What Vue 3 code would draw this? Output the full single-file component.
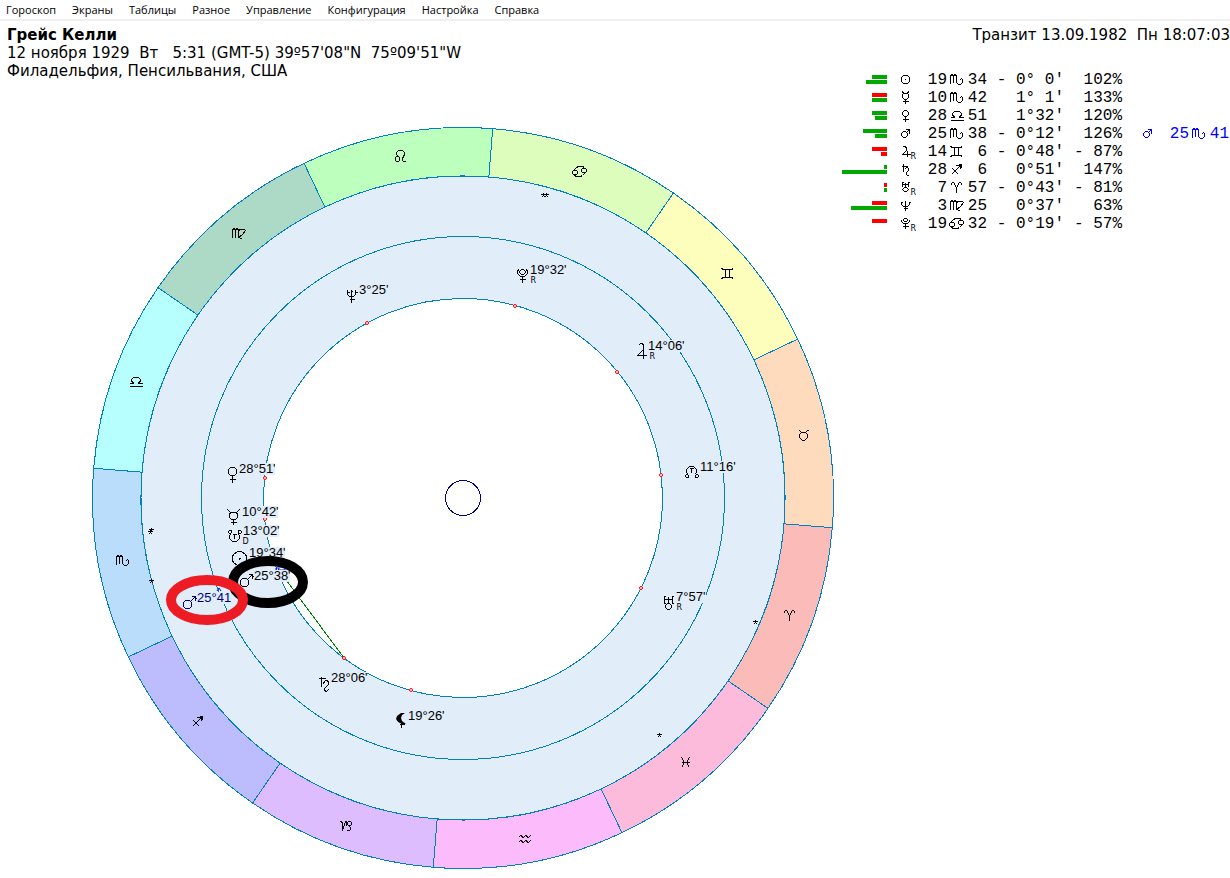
<script setup>
const menu = ['Гороскоп', 'Экраны', 'Таблицы', 'Разное', 'Управление', 'Конфигурация', 'Настройка', 'Справка']

const CX = 463
const CY = 498
const R_OUT = 370.5
const R_IN = 322

// Zodiac glyphs, drawn round their own centre
const zodiac = {
  aries: 'M-5 -3 v-1 l1 -1 h1 l2 3 l1 3 v4 M5 -3 v-1 l-1 -1 h-1 l-2 3 l-1 3 v4',
  taurus: 'M-5 -5 h1 l2 2 h4 l2 -2 h1 M-2 -3 l-2 2 v3 l3 3 h2 l3 -3 v-3 l-2 -2',
  gemini: 'M-6 -5 l2 1 h8 l2 -1 M-6 5 l2 -1 h8 l2 1 M-2 -4 v8 M2 -4 v8',
  cancer: 'M-6 -1 h3 l1 1 v2 l-1 1 h-3 l-1 -1 v-2 z M3 -3 h3 l1 1 v2 l-1 1 h-3 l-1 -1 v-2 z M-6 -1 l3 -3 l2 -1 h4 l2 1 M6 1 l-3 3 l-2 1 h-4 l-2 -1',
  leo: 'M-4 0 h2 l1 1 v3 l-1 1 h-2 l-1 -1 v-3 z M-2 0 l-2 -2 v-2 l2 -2 h4 l2 2 v2 l-2 4 v2 l1 1 h2',
  virgo: 'M-6 -5 v9 M-6 -3 l1 -2 h1 l1 2 v7 M-3 -3 l1 -2 h1 l1 2 v6 l2 2 h1 M0 -3 l2 -1 h4 l1 1 l-3 4 l-4 3',
  libra: 'M-6 5 h13 M-6 2 h4 v-1 l-2 -1 v-2 l2 -2 h5 l2 2 v2 l-2 1 v1 h4',
  scorpio: 'M-6 -5 v9 M-6 -3 l1 -2 h1 l1 2 v6 M-3 -3 l1 -2 h1 l1 2 v6 l2 2 h2 l2 -2 v-3 M3 1 l2 -2 l2 2',
  sagittarius: 'M-5 5 l10 -10 M-4 -1 l6 6 M0 -4 l5 -1 l-1 5 M2 -4 h3 M3 -3 h2 M4 -2 h1',
  capricorn: 'M-6 -4 h2 l1 2 v7 l3 -9 l1 0 v4 l1 1 M3 -4 h2 l1 1 v2 l-1 1 h-2 l-1 -1 v-2 z M3 0 l2 2 v2 l-1 1 h-3',
  aquarius: 'M-6 -1 l2 -2 h1 l1 2 h1 l2 -2 h1 l1 2 h1 l2 -2 M-6 4 l2 -2 h1 l1 2 h1 l2 -2 h1 l1 2 h1 l2 -2',
  pisces: 'M-4 -5 l2 3 v4 l-2 3 M4 -5 l-2 3 v4 l2 3 M-4 0 h8',
}

// Planet glyphs of the chart
const big = {
  venus: 'M-2 -7 h4 l2 2 v4 l-2 2 h-4 l-2 -2 v-4 z M0 1 v7 M-3 5 h6',
  mercury: 'M-6 -7 l3 3 h6 l3 -3 M-3 -4 l-1 2 v3 l2 2 h4 l2 -2 v-3 l-1 -2 M0 3 v5 M-3 6 h6',
  south: 'M-5 -6 h2 v2 l-1 1 h-1 l-1 -1 v-1 z M4 -6 h2 l1 1 v1 l-1 1 h-1 l-1 -1 z M-4 -3 l-1 3 v2 l3 3 h4 l3 -3 v-2 l-1 -3 M-2 -2 h4 M0 -2 v4',
  north: 'M-5 6 h2 v-2 l-1 -1 h-1 l-1 1 v1 z M4 6 h2 l1 -1 v-1 l-1 -1 h-1 l-1 1 z M-4 3 l-1 -3 v-2 l3 -3 h4 l3 3 v2 l-1 3 M-2 -3 h4 M0 -3 v4',
  sun: 'M-2 -7 h4 l4 3 l1 2 v4 l-1 2 l-4 3 h-4 l-4 -3 l-1 -2 v-4 l1 -2 z M-1 0 h2 M0 -1 v2',
  mars: 'M-4 -2 h4 l2 2 v4 l-2 2 h-4 l-2 -2 v-4 z M1 -1 l5 -5 M2 -6 h4 v4 M6 -4 h1',
  saturn: 'M-5 -4 h7 M-2 -6 v10 M-1 2 l3 -4 h2 l1 2 v2 l-4 4 v2 l2 1 l2 -2',
  neptune: 'M-4 -6 v5 l2 2 h4 l2 -2 v-5 M0 -6 v13 M-5 -3 h3 M3 -3 h3 M-2 4 h5 M-1 -4 h2',
  pluto: 'M-1 -5 h2 l2 2 v1 l-2 2 h-2 l-2 -2 v-1 z M-4 -5 l-1 2 v2 l3 3 h4 l3 -3 v-2 l-1 -2 M0 2 v6 M-3 5 h6',
  jupiter: 'M-3 -5 l2 -2 h2 l1 2 v4 l-6 6 h9 M2 -3 v11',
  uranus: 'M-4 -6 v7 M4 -6 v7 M-4 -3 h8 M0 -6 v6 M-5 -6 h2 M3 -6 h2 M-5 1 h2 M3 1 h2 M-1 1 h2 l2 2 v2 l-2 2 h-2 l-2 -2 v-2 z',
  lilith: 'M0 4 v6 M-2 7 h5',
}

// Smaller glyphs of the table
const small = {
  sun: 'M-2 -4 h4 l2 2 v4 l-2 2 h-4 l-2 -2 v-4 z M-0.5 0 h1',
  mercury: 'M-3 -6 l1 2 h4 l1 -2 M-2 -4 l-1 1 v3 l2 2 h2 l2 -2 v-3 l-1 -1 M0 2 v4 M-3 4 h6',
  venus: 'M-1 -5 h2 l2 2 v2 l-2 2 h-2 l-2 -2 v-2 z M0 1 v5 M-3 4 h6',
  mars: 'M-2 -2 h2 l2 2 v2 l-2 2 h-2 l-2 -2 v-2 z M1 -1 l3 -3 M0 -4 h4 v4',
  jupiter: 'M-3 -4 l1 -1 h2 l1 2 v2 l-4 4 h8 M2 -1 v6',
  saturn: 'M-4 -3 h6 M-2 -6 v8 M-1 0 l2 -2 h1 l1 1 v2 l-2 2 v2 l1 1 h1',
  uranus: 'M-3 -5 v4 M3 -5 v4 M-4 -5 h2 M2 -5 h2 M-3 -3 h6 M0 -5 v5 M-1 0 h2 l2 2 l-2 2 h-2 l-2 -2 z',
  neptune: 'M-4 -4 v3 l2 2 h4 l2 -2 v-3 M0 -5 v10 M-5 -3 h2 M3 -3 h2 M-2 3 h4',
  pluto: 'M-1 -5 h2 l1 1 v1 l-1 1 h-2 l-1 -1 v-1 z M-4 -4 v2 l2 2 h4 l2 -2 v-2 M0 0 v5 M-3 3 h6',
}

const polar = (r, deg) => {
  const a = (deg * Math.PI) / 180
  return `${(CX + r * Math.cos(a)).toFixed(2)} ${(CY - r * Math.sin(a)).toFixed(2)}`
}
const sector = (start) =>
  `M${polar(R_IN, start)} L${polar(R_OUT, start)} A${R_OUT} ${R_OUT} 0 0 0 ${polar(R_OUT, start + 30)} L${polar(R_IN, start + 30)} A${R_IN} ${R_IN} 0 0 1 ${polar(R_IN, start)}Z`

const signs = [
  { name: 'taurus', start: -4.6, fill: '#fddbbc', x: 803.5, y: 435.5 },
  { name: 'gemini', start: 25.4, fill: '#fdfdbc', x: 727.5, y: 273.5 },
  { name: 'cancer', start: 55.4, fill: '#ddfdbc', x: 579.5, y: 171.5 },
  { name: 'leo', start: 85.4, fill: '#bdffbd', x: 400.5, y: 156.5 },
  { name: 'virgo', start: 115.4, fill: '#addac6', x: 238.5, y: 233.5 },
  { name: 'libra', start: 145.4, fill: '#b6fffe', x: 135.5, y: 381.5 },
  { name: 'scorpio', start: 175.4, fill: '#bbddfc', x: 122.5, y: 560.5 },
  { name: 'sagittarius', start: 205.4, fill: '#bdbdfd', x: 197.5, y: 721.5 },
  { name: 'capricorn', start: 235.4, fill: '#ddbdfd', x: 345.5, y: 825.5 },
  { name: 'aquarius', start: 265.4, fill: '#fcbbfb', x: 524.5, y: 838.5 },
  { name: 'pisces', start: 295.4, fill: '#fcbbdb', x: 685.5, y: 762.5 },
  { name: 'aries', start: 325.4, fill: '#fbbcb9', x: 789.5, y: 615.5 },
]

const planets = [
  { g: 'neptune', x: 351.5, y: 295.5, label: "3°25'", lx: 359, ly: 294 },
  { g: 'pluto', x: 522.5, y: 274.5, label: "19°32'", lx: 530, ly: 274, mark: 'R' },
  { g: 'jupiter', x: 641.5, y: 350.5, label: "14°06'", lx: 648, ly: 350, mark: 'R' },
  { g: 'north', x: 691.5, y: 471.5, label: "11°16'", lx: 700, ly: 471 },
  { g: 'uranus', x: 668.5, y: 602.5, label: "7°57'", lx: 676, ly: 601, mark: 'R' },
  { g: 'lilith', x: 401.5, y: 717.5, label: "19°26'", lx: 408, ly: 720 },
  { g: 'saturn', x: 323.5, y: 682.5, label: "28°06'", lx: 331, ly: 682 },
  { g: 'venus', x: 232.5, y: 474.5, label: "28°51'", lx: 239, ly: 473 },
  { g: 'mercury', x: 233.5, y: 516.5, label: "10°42'", lx: 242, ly: 516 },
  { g: 'south', x: 234.5, y: 536.5, label: "13°02'", lx: 243, ly: 535, mark: 'D' },
  { g: 'sun', x: 239.5, y: 558.5, label: "19°34'", lx: 249, ly: 557 },
  { g: 'mars', x: 246.5, y: 580.5, label: "25°38'", lx: 254, ly: 580 },
  { g: 'mars', x: 189.5, y: 602.5, label: '25°41', lx: 197, ly: 602, transit: true },
]

const dots = [[265, 478], [265, 519], [344, 658], [411, 690], [367, 323], [515, 306], [617, 372], [661, 475], [641, 588]]
const stars = [[543.5, 195.5], [546.5, 195.5], [150.5, 532.5], [151.5, 530.5], [151.5, 581.5], [755.5, 622.5], [659.5, 735.5]]

const rows = [
  { g: 'sun', bars: [[15, 'g'], [21, 'g']], deg: '19', sign: 'scorpio', min: '34', speed: "- 0° 0'", pct: '102%' },
  { g: 'mercury', bars: [[15, 'r'], [15, 'g']], deg: '10', sign: 'scorpio', min: '42', speed: "1° 1'", pct: '133%' },
  { g: 'venus', bars: [[15, 'g'], [12, 'g']], deg: '28', sign: 'libra', min: '51', speed: "1°32'", pct: '120%' },
  { g: 'mars', bars: [[24, 'g'], [12, 'g']], deg: '25', sign: 'scorpio', min: '38', speed: "- 0°12'", pct: '126%', transit: { deg: '25', min: '41' } },
  { g: 'jupiter', bars: [[15, 'r'], [6, 'r']], retro: true, deg: '14', sign: 'gemini', min: '6', speed: "- 0°48'", pct: '- 87%' },
  { g: 'saturn', bars: [[3, 'g'], [45, 'g']], deg: '28', sign: 'sagittarius', min: '6', speed: "0°51'", pct: '147%' },
  { g: 'uranus', bars: [[3, 'r'], [3, 'g']], retro: true, deg: '7', sign: 'aries', min: '57', speed: "- 0°43'", pct: '- 81%' },
  { g: 'neptune', bars: [[15, 'r'], [36, 'g']], deg: '3', sign: 'virgo', min: '25', speed: "0°37'", pct: '63%' },
  { g: 'pluto', bars: [[15, 'r']], retro: true, deg: '19', sign: 'cancer', min: '32', speed: "- 0°19'", pct: '- 57%' },
]
</script>

<template>
  <div class="app">
    <nav class="menu">
      <button v-for="m in menu" :key="m" type="button">{{ m }}</button>
    </nav>
    <main class="main">
      <section class="natal">
        <h1>Грейс Келли</h1>
        <p>12 ноября 1929&nbsp; Вт&nbsp;&nbsp; 5:31 (GMT-5) 39º57'08"N&nbsp; 75º09'51"W</p>
        <p>Филадельфия, Пенсильвания, США</p>
        <div class="wheel">
          <svg viewBox="92 127 742 742" role="img" aria-label="Карта">
            <g class="line">
              <path v-for="s in signs" :key="s.name" :d="sector(s.start)" :fill="s.fill" />
              <circle cx="463" cy="498" r="322" fill="#e1edf9" />
              <circle cx="463" cy="498" r="261.5" fill="none" />
              <circle cx="463" cy="498" r="199.5" fill="#fff" />
              <circle cx="463" cy="498" r="17.5" class="hub" />
            </g>
            <path d="M278 569 L344 658" class="aspect" />
            <path d="M276 568 h3 v3 h-3 z M279 567 h6 v3 h-5 M217 591 l2 -3 l2 3" class="transit-mark" />
            <circle v-for="d in dots" :key="d.join()" :cx="d[0]" :cy="d[1]" r="1.5" class="dot" />
            <path
              v-for="s in signs"
              :key="s.name"
              :d="zodiac[s.name]"
              :transform="`translate(${s.x} ${s.y})`"
              class="glyph"
            />
            <path
              v-for="(s, i) in stars"
              :key="i"
              d="M0 -2.5 v3 M-2.5 -1 h2 M0.5 -1 h2 M-1.5 1 h1 M0.5 1 h1"
              :transform="`translate(${s[0]} ${s[1]})`"
              class="glyph"
            />
            <g v-for="p in planets" :key="p.label" :class="{ blue: p.transit }">
              <rect :x="p.lx" :y="p.ly - 10" :width="p.label.length * 6" height="12" fill="#e1edf9" />
              <path :d="big[p.g]" :transform="`translate(${p.x} ${p.y})`" class="glyph" />
              <text :x="p.lx" :y="p.ly" class="label">{{ p.label }}</text>
              <text v-if="p.mark" :x="p.x + 8" :y="p.ly + 9" class="mark">{{ p.mark }}</text>
            </g>
            <path d="M405 713 h-4 l-4 3 l-1 3 l2 3 l4 2 h4 l-4 -3 l-1 -3 l1 -3 z" fill="#000" />
            <ellipse cx="268" cy="582" rx="35" ry="21" class="ring" stroke="#000" />
            <ellipse cx="207" cy="600" rx="36" ry="20" class="ring" stroke="#ed1c24" />
          </svg>
        </div>
      </section>
      <section class="transit">
        <p class="when">Транзит 13.09.1982&nbsp; Пн 18:07:03</p>
        <table>
          <colgroup>
            <col class="c-bars" />
            <col class="c-planet" />
            <col class="c-deg" />
            <col class="c-sign" />
            <col class="c-min" />
            <col class="c-speed" />
            <col class="c-pct" />
            <col class="c-tplanet" />
            <col class="c-tdeg" />
            <col class="c-sign" />
            <col class="c-min" />
          </colgroup>
          <tbody>
            <tr v-for="r in rows" :key="r.g">
              <td>
                <div class="bars">
                  <span v-for="(b, i) in r.bars" :key="i" :class="b[1]" :style="{ width: b[0] + 'px' }"></span>
                </div>
              </td>
              <td>
                <svg width="36" height="18" viewBox="-18.5 -8.5 36 18">
                  <path :d="small[r.g]" class="glyph" />
                  <text v-if="r.retro" x="5" y="7" class="mark">R</text>
                </svg>
              </td>
              <td>{{ r.deg }}</td>
              <td>
                <svg width="20" height="18" viewBox="-9.5 -8.5 20 18"><path :d="zodiac[r.sign]" class="glyph" /></svg>
              </td>
              <td>{{ r.min }}</td>
              <td>{{ r.speed }}</td>
              <td>{{ r.pct }}</td>
              <template v-if="r.transit">
                <td class="blue planet">
                  <svg width="28" height="18" viewBox="-13.5 -8.5 28 18"><path :d="small[r.g]" class="glyph" /></svg>
                </td>
                <td class="blue">{{ r.transit.deg }}</td>
                <td class="blue">
                  <svg width="20" height="18" viewBox="-9.5 -8.5 20 18"><path :d="zodiac[r.sign]" class="glyph" /></svg>
                </td>
                <td class="blue">{{ r.transit.min }}</td>
              </template>
              <td v-else colspan="4"></td>
            </tr>
          </tbody>
        </table>
      </section>
    </main>
  </div>
</template>

<style>
body {
  margin: 0;
  background: #fff;
}
</style>

<style scoped>
.app {
  color: #000;
  font: 15px/18px "DejaVu Sans", sans-serif;
}
.menu {
  display: flex;
  gap: 16px;
  padding: 0 6px;
  border-bottom: 2px solid #f0f0f0;
}
.menu button {
  padding: 1px 0 0;
  border: 0;
  background: none;
  color: #000;
  font: 11px/18px "Open Sans", sans-serif;
}
.main {
  display: grid;
  grid-template-columns: minmax(0, 1fr) 396px;
  padding-top: 5px;
}
h1,
p {
  margin: 0;
  font-size: 15px;
  line-height: 18px;
  white-space: nowrap;
}
.natal > h1,
.natal > p {
  padding-left: 7px;
}
.wheel {
  margin-top: 47px;
  padding-left: 92px;
}
.wheel svg {
  display: block;
  width: 100%;
}
.line {
  stroke: #0080c0;
  stroke-width: 1;
  shape-rendering: crispEdges;
}
.hub {
  fill: #fff;
  stroke: #000080;
}
.glyph {
  fill: none;
  stroke: #000;
  stroke-width: 1;
  shape-rendering: crispEdges;
}
.aspect {
  stroke: #008000;
  shape-rendering: crispEdges;
}
.transit-mark {
  fill: none;
  stroke: #00f;
}
.dot {
  fill: #fff;
  stroke: #f00;
}
.ring {
  fill: none;
  stroke-width: 10;
}
.label {
  font: 13px "Liberation Sans", sans-serif;
}
.mark {
  font: 8px "DejaVu Sans", sans-serif;
}
g.blue .glyph {
  stroke: #000080;
}
g.blue .label {
  fill: #000080;
}
.transit {
  display: flex;
  flex-direction: column;
}
.when {
  align-self: flex-end;
}
table {
  width: 387px;
  margin: 27px 0 0 8px;
  border-collapse: collapse;
  table-layout: fixed;
  font: 16px/18px "Liberation Mono", monospace;
}
td {
  height: 18px;
  padding: 0;
  text-align: right;
  vertical-align: top;
  white-space: pre;
}
td svg {
  display: block;
}
td.planet {
  padding-left: 12px;
}
td.blue {
  color: #00f;
}
td.blue .glyph {
  stroke: #00f;
}
.c-bars {
  width: 45px;
}
.c-planet {
  width: 36px;
}
.c-deg {
  width: 24px;
}
.c-sign,
.c-min {
  width: 20px;
}
.c-speed {
  width: 77px;
}
.c-pct {
  width: 58px;
}
.c-tplanet {
  width: 40px;
}
.c-tdeg {
  width: 27px;
}
.bars {
  display: flex;
  flex-direction: column;
  align-items: flex-end;
  gap: 1px;
  padding-top: 4px;
}
.bars span {
  height: 4px;
}
.g {
  background: #00a800;
}
.r {
  background: #f00;
}
</style>
